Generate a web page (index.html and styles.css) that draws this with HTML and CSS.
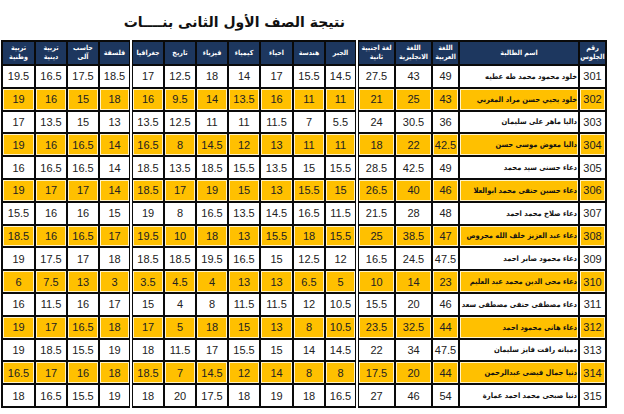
FILE: index.html
```html
<!DOCTYPE html>
<html lang="ar">
<head>
<meta charset="utf-8">
<title>نتيجة الصف الأول الثانى</title>
<link rel="stylesheet" href="styles.css">
</head>
<body>
<div class="page">
  <h1 class="title">نتيجة الصف الأول الثانى بنــــات</h1>
  <table class="results">
    <colgroup>
      <col class="c-seat"><col class="c-name"><col class="c-ar"><col class="c-en"><col class="c-l2">
      <col class="c-n"><col class="c-n"><col class="c-w"><col class="c-n"><col class="c-n"><col class="c-n">
      <col class="c-w"><col class="c-n"><col class="c-n"><col class="c-n"><col class="c-w">
    </colgroup>
    <thead>
      <tr>
        <th>رقم<br>الجلوس</th>
        <th>اسم الطالبة</th>
        <th>اللغة<br>العربية</th>
        <th>اللغة<br>الانجليزية</th>
        <th class="dbl">لغة اجنبية<br>ثانية</th>
        <th>الجبر</th>
        <th>هندسة</th>
        <th>احياء</th>
        <th>كيمياء</th>
        <th>فيزياء</th>
        <th>تاريخ</th>
        <th class="dbl">جغرافيا</th>
        <th>فلسفة</th>
        <th>حاسب<br>آلى</th>
        <th>تربية<br>دينية</th>
        <th>تربية<br>وطنية</th>
      </tr>
    </thead>
    <tbody>
      <tr><td>301</td><td class="name">خلود محمود محمد طه عطيه</td><td>49</td><td>43</td><td class="dbl">27.5</td><td>14.5</td><td>15.5</td><td>17</td><td>14</td><td>18</td><td>12.5</td><td class="dbl">17</td><td>18.5</td><td>17.5</td><td>16.5</td><td>19.5</td></tr>
      <tr class="hl"><td>302</td><td class="name">خلود يحيي حسن مراد المغربي</td><td>43</td><td>25</td><td class="dbl">21</td><td>11</td><td>11</td><td>16</td><td>13.5</td><td>14</td><td>9.5</td><td class="dbl">16</td><td>18</td><td>15</td><td>16</td><td>19</td></tr>
      <tr><td>303</td><td class="name">داليا ماهر على سليمان</td><td>36</td><td>30.5</td><td class="dbl">24</td><td>5.5</td><td>7</td><td>11.5</td><td>11</td><td>11</td><td>12.5</td><td class="dbl">13.5</td><td>13</td><td>15</td><td>13.5</td><td>17</td></tr>
      <tr class="hl"><td>304</td><td class="name">داليا معوض موسى حسن</td><td>42.5</td><td>22</td><td class="dbl">18</td><td>11</td><td>11</td><td>13</td><td>12</td><td>14.5</td><td>8</td><td class="dbl">16.5</td><td>14</td><td>16.5</td><td>16</td><td>19</td></tr>
      <tr><td>305</td><td class="name">دعاء حسنى سيد محمد</td><td>49</td><td>42.5</td><td class="dbl">28.5</td><td>15.5</td><td>15</td><td>13.5</td><td>15.5</td><td>18.5</td><td>13.5</td><td class="dbl">18.5</td><td>14</td><td>16.5</td><td>16.5</td><td>16</td></tr>
      <tr class="hl"><td>306</td><td class="name">دعاء حسين حنفى محمد ابوالعلا</td><td>46</td><td>40</td><td class="dbl">26.5</td><td>15</td><td>15.5</td><td>13</td><td>15</td><td>19</td><td>17</td><td class="dbl">18.5</td><td>14</td><td>17</td><td>17</td><td>19</td></tr>
      <tr><td>307</td><td class="name">دعاء صلاح محمد احمد</td><td>48</td><td>28</td><td class="dbl">21.5</td><td>11.5</td><td>16.5</td><td>14.5</td><td>13.5</td><td>16.5</td><td>8</td><td class="dbl">19</td><td>15</td><td>16</td><td>16</td><td>15.5</td></tr>
      <tr class="hl"><td>308</td><td class="name">دعاء عبد العزيز خلف الله محروص</td><td>47</td><td>38.5</td><td class="dbl">25</td><td>15.5</td><td>18</td><td>15.5</td><td>13</td><td>18</td><td>10</td><td class="dbl">19.5</td><td>17</td><td>16.5</td><td>16</td><td>18.5</td></tr>
      <tr><td>309</td><td class="name">دعاء محمود صابر  احمد</td><td>47.5</td><td>24.5</td><td class="dbl">16.5</td><td>12</td><td>12.5</td><td>15</td><td>16.5</td><td>19.5</td><td>18.5</td><td class="dbl">18.5</td><td>18</td><td>17</td><td>17.5</td><td>19</td></tr>
      <tr class="hl"><td>310</td><td class="name">دعاء محى الدين محمد عبد العليم</td><td>23</td><td>14</td><td class="dbl">10</td><td>5</td><td>6.5</td><td>13</td><td>13</td><td>4</td><td>4.5</td><td class="dbl">3.5</td><td>3</td><td>13</td><td>7.5</td><td>6</td></tr>
      <tr><td>311</td><td class="name">دعاء مصطفى حنفى مصطفى سعد</td><td>46</td><td>20</td><td class="dbl">15.5</td><td>10.5</td><td>12</td><td>11.5</td><td>11.5</td><td>8</td><td>4</td><td class="dbl">15</td><td>17</td><td>16</td><td>11.5</td><td>16</td></tr>
      <tr class="hl"><td>312</td><td class="name">دعاء هانى محمود احمد</td><td>44</td><td>32.5</td><td class="dbl">23.5</td><td>10.5</td><td>8</td><td>13</td><td>15</td><td>18</td><td>5</td><td class="dbl">17</td><td>18</td><td>16.5</td><td>17</td><td>19</td></tr>
      <tr><td>313</td><td class="name">دميانه رافت فايز سليمان</td><td>47.5</td><td>34</td><td class="dbl">22</td><td>14.5</td><td>14</td><td>15</td><td>15.5</td><td>17</td><td>11.5</td><td class="dbl">18</td><td>19</td><td>15.5</td><td>18.5</td><td>19</td></tr>
      <tr class="hl"><td>314</td><td class="name">دنيا جمال فيضى عبدالرحمن</td><td>44</td><td>20</td><td class="dbl">17.5</td><td>8</td><td>8</td><td>14</td><td>12</td><td>14.5</td><td>7</td><td class="dbl">18.5</td><td>18</td><td>16</td><td>17</td><td>16.5</td></tr>
      <tr><td>315</td><td class="name">دنيا صبحى محمد احمد عمارة</td><td>54</td><td>46</td><td class="dbl">27</td><td>16.5</td><td>18</td><td>19</td><td>18</td><td>17.5</td><td>20</td><td class="dbl">18</td><td>19</td><td>15.5</td><td>16.5</td><td>18</td></tr>
    </tbody>
  </table>
</div>
</body>
</html>
```

FILE: styles.css
```css
html, body {
  margin: 0;
  padding: 0;
  background: #ffffff;
}

.page {
  width: 624px;
  height: 414px;
  padding: 0 17px 0 3px;
  box-sizing: border-box;
  direction: rtl;
}

.title {
  margin: 0;
  padding: 13px 262px 0 0;
  height: 27px;
  box-sizing: content-box;
  font-family: "DejaVu Sans", "Liberation Sans", sans-serif;
  font-size: 14px;
  font-weight: bold;
  line-height: 18px;
  color: #111111;
  text-align: right;
  white-space: nowrap;
}

.results {
  direction: rtl;
  border-collapse: collapse;
  table-layout: fixed;
  width: 604px;
  font-family: "Liberation Sans", Arial, sans-serif;
}

.c-seat { width: 27px; }
.c-name { width: 120px; }
.c-ar { width: 27px; }
.c-en { width: 37px; }
.c-l2 { width: 38px; }
.c-n { width: 32px; }
.c-w { width: 33px; }

.results th,
.results td {
  border: 2px solid #0a0a0a;
  padding: 0;
  text-align: center;
  overflow: hidden;
  white-space: nowrap;
}

.results th {
  height: 22px;
  background: #1d375f;
  color: #ffffff;
  font-family: "DejaVu Sans Condensed", "DejaVu Sans", sans-serif;
  font-size: 7px;
  font-weight: bold;
  line-height: 9px;
}

.results td {
  height: 20.8px;
  font-size: 11px;
  color: #222222;
  background: #ffffff;
}

.results tr.hl td {
  background: #ffc000;
  box-shadow: inset 0 0 0 1px #fff3c8;
}

.results th.dbl,
.results td.dbl {
  border-left: 4px double #0a0a0a;
}

.results td.name {
  text-align: right;
  padding-right: 1px;
  font-family: "DejaVu Sans Condensed", "DejaVu Sans", sans-serif;
  font-size: 7.5px;
  font-weight: bold;
  color: #111111;
}
```
